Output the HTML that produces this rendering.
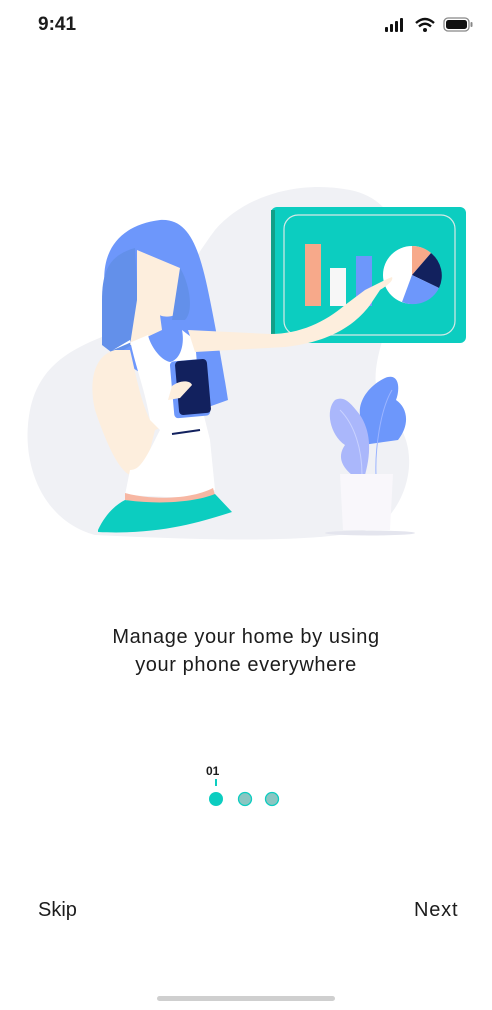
<!DOCTYPE html>
<html><head><meta charset="utf-8"><style>
html,body{margin:0;padding:0;background:#fff;}
body{width:492px;height:1010px;position:relative;overflow:hidden;font-family:"Liberation Sans",sans-serif;}
.t{position:absolute;color:#1c1c1c;}
</style></head><body>
<div class="t" style="left:38px;top:14px;font-size:19px;font-weight:bold;">9:41</div>
<svg style="position:absolute;left:0;top:0" width="492" height="1010">
<rect x="385" y="27" width="3" height="5" rx="1" fill="#111"/>
<rect x="390" y="24" width="3" height="8" rx="1" fill="#111"/>
<rect x="395" y="21" width="3" height="11" rx="1" fill="#111"/>
<rect x="400" y="18" width="3" height="14" rx="1" fill="#111"/>
<path d="M416 23 Q425 15 434 23" stroke="#111" stroke-width="2.4" fill="none"/>
<path d="M419 26.5 Q425 21 431 26.5" stroke="#111" stroke-width="2.4" fill="none"/>
<circle cx="425" cy="30" r="2" fill="#111"/>
<rect x="444" y="18" width="25" height="13" rx="4" fill="none" stroke="#111" stroke-width="1.3" opacity=".5"/>
<rect x="446" y="20" width="21" height="9" rx="2.5" fill="#111"/>
<rect x="470.5" y="22" width="2" height="5" rx="1" fill="#111" opacity=".5"/>

<path d="M95 535 C40 520 20 460 30 410 C40 360 80 345 120 330 C170 310 185 270 215 230 C245 195 300 180 350 190 C400 200 410 250 395 300 C380 350 360 390 395 420 C420 450 410 500 380 525 C340 545 200 540 95 535Z" fill="#f0f1f5"/>
<ellipse cx="370" cy="533" rx="45" ry="2.5" fill="#e4e5ee"/>
<path d="M105 290 C100 250 120 225 160 220 C190 218 200 250 210 300 C218 340 225 380 228 400 L200 410 L120 360 L110 340Z" fill="#6d97fb"/>
<path d="M102 300 C102 270 110 255 135 248 L140 340 L115 355 L102 345Z" fill="#6390ea"/>
<path d="M137 250 L180 268 C183 290 185 310 175 315 C168 318 160 316 160 315 L162 330 L130 345 L137 300Z" fill="#fdeedd"/>
<path d="M180 268 C188 280 195 310 185 320 L172 320Z" fill="#6390ea"/>
<path d="M115 350 C95 355 88 380 95 410 C105 440 118 470 130 475 L145 470 L155 430 L180 420 L190 400 L175 385 L150 420 C140 400 135 370 130 350Z" fill="#fdeedd"/>
<path d="M113 350 L130 340 C135 365 145 390 150 420 L160 430 C145 460 140 470 130 470 L125 495 L190 498 L215 490 L210 440 L200 400 L195 340 L182 330 C185 345 180 360 170 362 C160 360 150 345 148 335 Z" fill="#ffffff"/>
<path d="M125 493 C150 500 190 500 213 488 L215 495 C190 505 150 505 125 500Z" fill="#f7b7a3"/>
<path d="M98 530 C105 515 115 505 125 500 C160 505 195 502 215 494 L232 512 C200 522 160 535 98 532Z" fill="#0ccdc0"/>
<rect x="172" y="360" width="36" height="57" rx="4" fill="#6d97fb" transform="rotate(-5 190 388)"/>
<rect x="177" y="360" width="32" height="54" rx="4" fill="#12215e" transform="rotate(-5 193 387)"/>
<path d="M172 386 C180 380 190 380 192 385 L180 398 L168 400Z" fill="#fdeedd"/>
<path d="M172 434 L200 430" stroke="#12215e" stroke-width="2"/>
<rect x="271" y="207" width="195" height="136" rx="6" fill="#0ccdc0"/>
<rect x="271" y="210" width="4" height="130" fill="#129f88"/>
<rect x="284" y="215" width="171" height="120" rx="14" fill="none" stroke="#d7e9e6" stroke-width="1.2"/>
<rect x="305" y="244" width="16" height="62" fill="#f7a98a"/>
<rect x="330" y="268" width="16" height="38" fill="#f7f7f7"/>
<rect x="356" y="256" width="16" height="50" fill="#6d97fb"/>
<circle cx="412" cy="275" r="29" fill="#ffffff"/>
<path d="M412 275 L412 246 A29 29 0 0 1 431 253Z" fill="#f7a98a"/>
<path d="M412 275 L431 253 A29 29 0 0 1 439 288Z" fill="#12215e"/>
<path d="M412 275 L439 288 A29 29 0 0 1 402 302Z" fill="#6d97fb"/>
<path d="M188 330 L270 334 C300 334 325 322 345 305 L365 290 L385 280 L392 277 C394 281 386 286 380 290 L370 305 C355 325 330 342 285 347 L195 352Z" fill="#fdeedd"/>
<path d="M356 446 C345 440 348 425 360 415 C358 400 370 385 385 378 C400 372 400 390 396 400 C408 408 410 425 398 440 Z" fill="#6d97fb"/>
<path d="M352 475 C340 465 338 455 345 445 C330 435 325 410 335 400 C345 395 352 405 360 415 C370 430 372 450 365 475Z" fill="#aab7fb"/>
<path d="M340 410 C355 425 362 450 362 475" stroke="#c9d2ff" stroke-width="1" fill="none"/>
<path d="M392 390 C380 410 375 450 376 475" stroke="#9bb4ff" stroke-width="1" fill="none"/>
<path d="M340 474 L393 474 L390 530 L343 530Z" fill="#f9f7fb"/>
<rect x="215" y="779" width="2" height="7" fill="#0ccdc0"/>
<circle cx="216" cy="799" r="7" fill="#0ccdc0"/>
<circle cx="245" cy="799" r="6.5" fill="#8ac6c2" stroke="#0ccdc0" stroke-width="1.3"/>
<circle cx="272" cy="799" r="6.5" fill="#8ac6c2" stroke="#0ccdc0" stroke-width="1.3"/>
<rect x="157" y="996" width="178" height="5" rx="2.5" fill="#cfcfcf"/>
</svg>
<div class="t" style="left:0;width:492px;text-align:center;top:623px;font-size:20px;letter-spacing:0.6px;line-height:28px;">Manage your home by using<br>your phone everywhere</div>
<div class="t" style="left:206px;top:764px;font-size:12px;font-weight:bold;">01</div>
<div class="t" style="left:38px;top:899px;font-size:20px;">Skip</div>
<div class="t" style="left:414px;top:899px;font-size:20px;letter-spacing:0.8px;">Next</div>
</body></html>
